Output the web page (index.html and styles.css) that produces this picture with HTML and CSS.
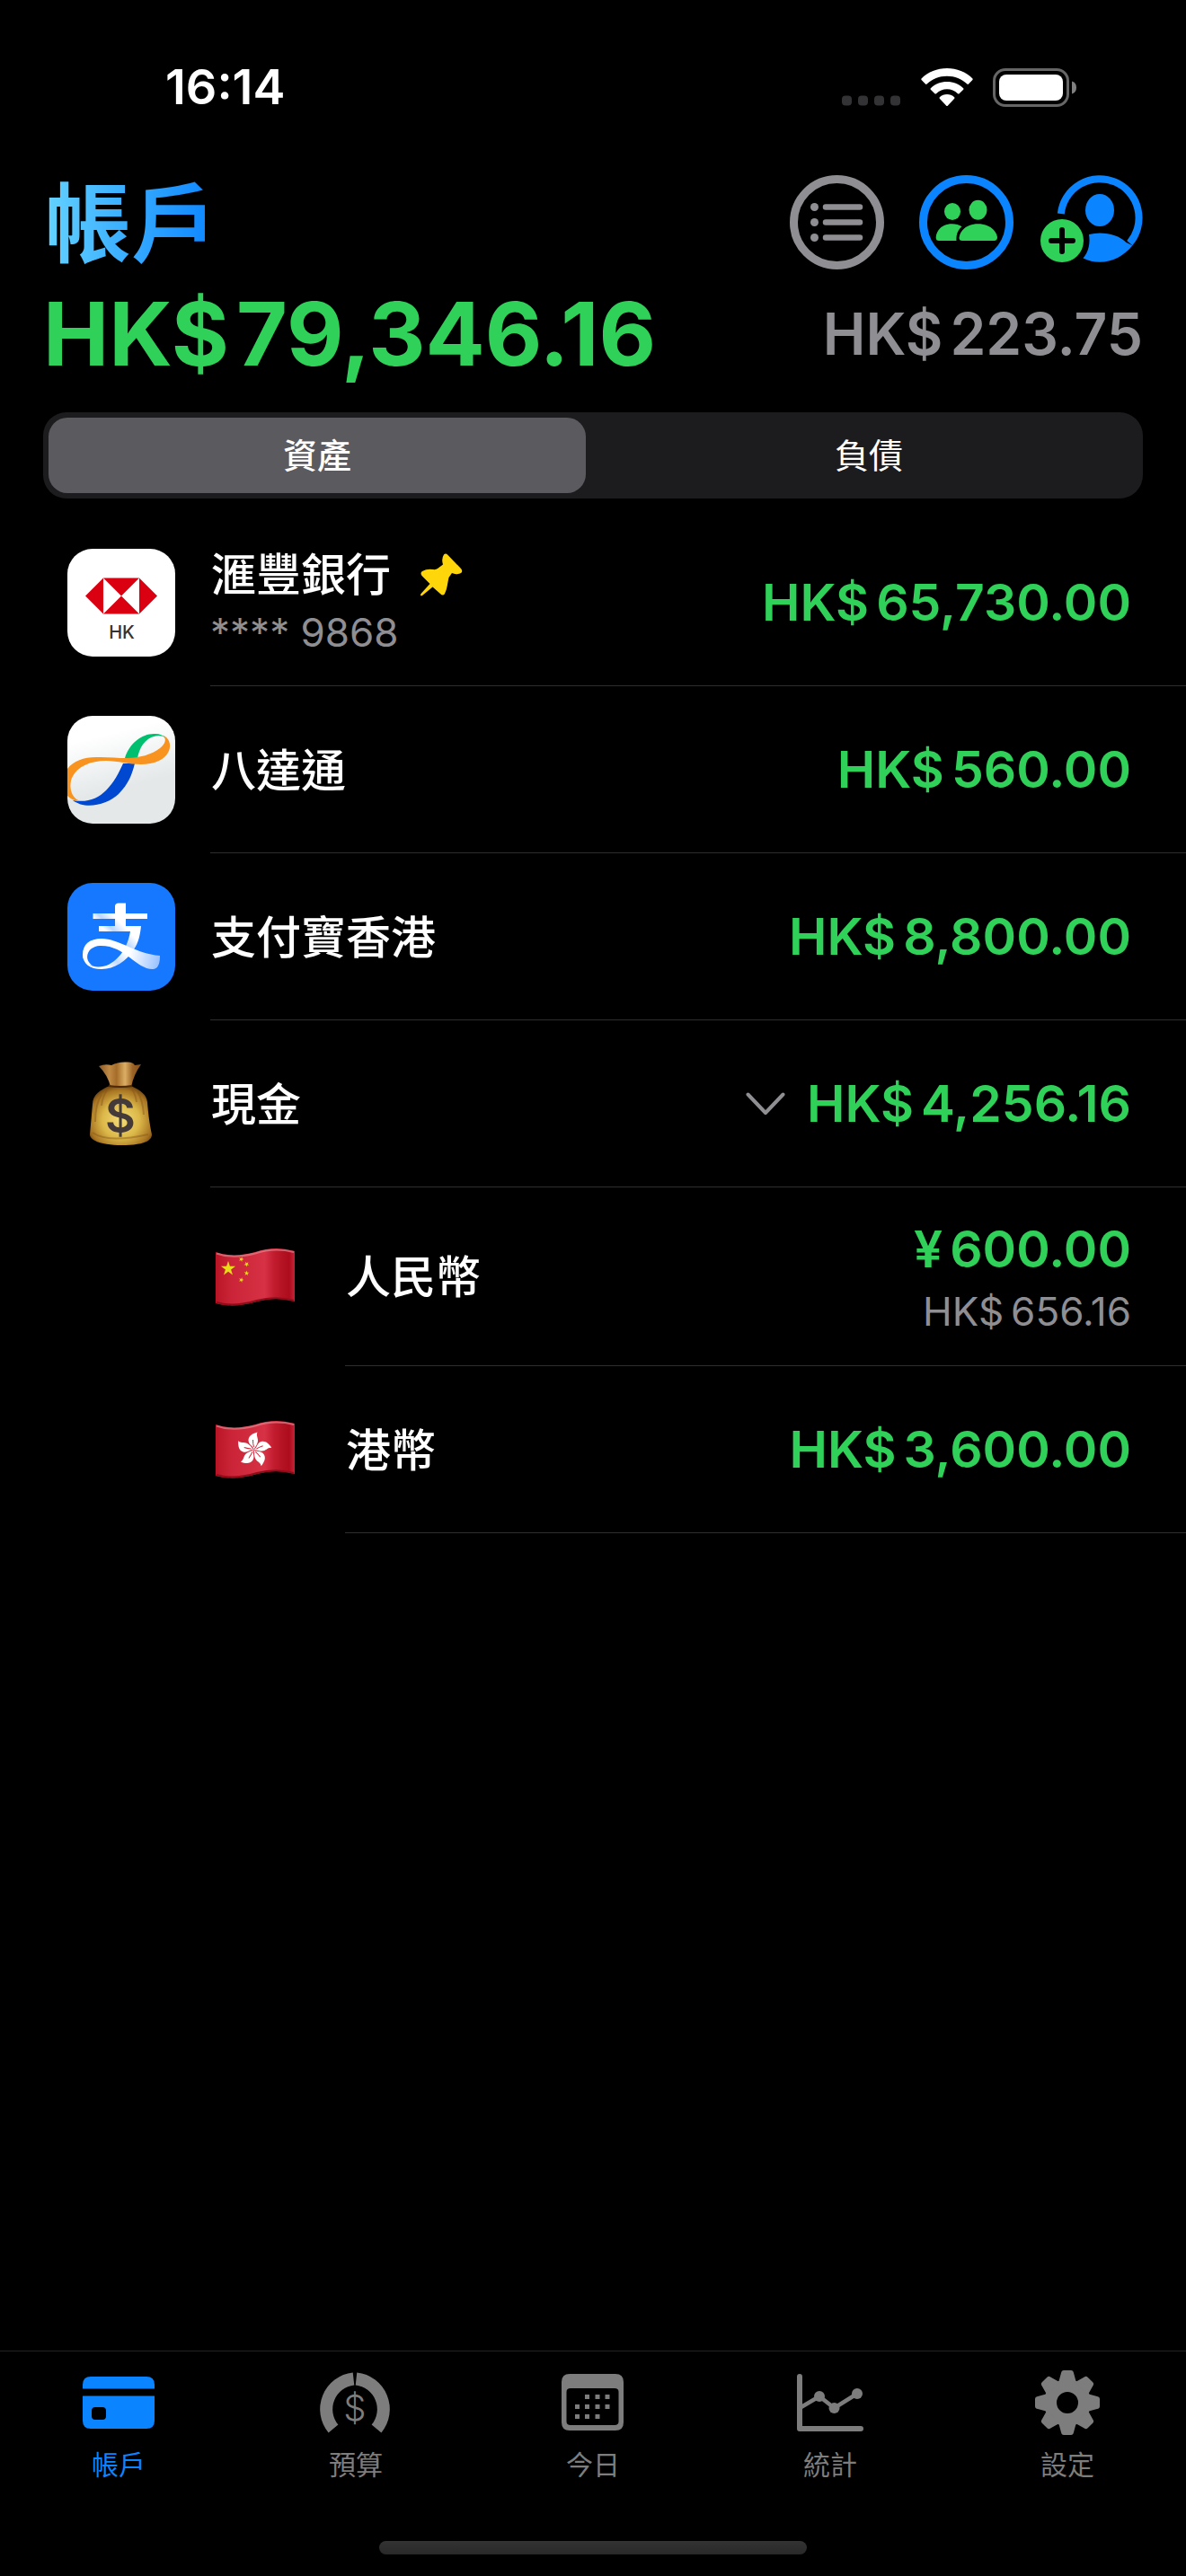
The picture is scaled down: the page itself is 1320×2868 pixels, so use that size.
FILE: index.html
```html
<!DOCTYPE html>
<html lang="zh-Hant-HK">
<head>
<meta charset="utf-8">
<meta name="viewport" content="width=device-width, initial-scale=1">
<title>帳戶</title>
<link rel="stylesheet" href="styles.css">
</head>
<body>
<div class="status">
  <time class="clock">16:14</time>
  <div class="status-icons">
    <svg width="66" height="43" viewBox="0 0 66 43" fill="#333335" aria-hidden="true">
      <rect x="0" y="30.500" width="11" height="11" rx="4"/><rect x="18" y="30.500" width="11" height="11" rx="4"/><rect x="36" y="30.500" width="11" height="11" rx="4"/><rect x="54" y="30.500" width="11" height="11" rx="4"/>
    </svg>
    <svg width="58" height="43" viewBox="0 0 58 43" fill="#fff" aria-hidden="true">
      <path d="M29 0C40 0 50 4 57.500 11.500Q58 12.300 57.400 13L53 17.600Q52.200 18.300 51.400 17.600C45 12 38 8.800 29 8.800S13 12 6.600 17.600Q5.800 18.300 5 17.600L.6 13Q0 12.300 .5 11.500C8 4 18 0 29 0Z"/>
      <path d="M29 15C36 15 42 17.500 47.200 22.200Q47.800 23 47.200 23.700L42.600 28.200Q41.800 28.800 41 28.200C37.500 25 33.500 23.300 29 23.300S20.500 25 17 28.200Q16.200 28.800 15.400 28.200L10.800 23.700Q10.200 23 10.800 22.200C16 17.500 22 15 29 15Z"/>
      <path d="M29 29C32 29 35 30.200 37.200 32.200Q37.800 33 37.200 33.700L30 41.400Q29 42.400 28 41.400L20.800 33.700Q20.200 33 20.800 32.200C23 30.200 26 29 29 29Z"/>
    </svg>
    <svg width="94" height="43" viewBox="0 0 94 43" aria-hidden="true">
      <rect x="1.500" y="1.500" width="82" height="40" rx="12.500" fill="none" stroke="#666" stroke-width="3"/>
      <rect x="7" y="7" width="71" height="29" rx="8" fill="#fff"/>
      <path d="M88 14.500Q93 16 93 21.500T88 28.500Z" fill="#808080"/>
    </svg>
  </div>
</div>

<header class="header">
  <div class="title-row">
    <h1 class="title">帳戶</h1>
    <div class="actions">
      <button class="icon-button" type="button" aria-label="清單">
        <svg width="105" height="105" viewBox="0 0 105 105" fill="none" stroke="#8e8e93" aria-hidden="true">
          <circle cx="52.500" cy="52.500" r="48" stroke-width="9"/>
          <path d="M40 35.500H78M40 52.500H78M40 69.500H78" stroke-width="6.500" stroke-linecap="round"/>
          <g fill="#8e8e93" stroke="none"><circle cx="27.500" cy="35.500" r="4.500"/><circle cx="27.500" cy="52.500" r="4.500"/><circle cx="27.500" cy="69.500" r="4.500"/></g>
        </svg>
      </button>
      <button class="icon-button" type="button" aria-label="成員">
        <svg width="105" height="105" viewBox="0 0 105 105" fill="#30d158" aria-hidden="true">
          <circle cx="52.500" cy="52.500" r="48" stroke-width="9" stroke="#0a84ff" fill="none"/>
          <ellipse cx="37" cy="40.500" rx="9" ry="9.500"/>
          <ellipse cx="65.500" cy="38.800" rx="10" ry="11"/>
          <path d="M22 73Q18.500 73 18.700 69C19.500 60 27 54.300 36.500 54.300Q43 54.300 47.500 57.300C43 61 41 66 41.500 73Z"/>
          <path d="M48 73Q44 73 44.600 69C46 60 55 54.300 65.500 54.300S85.500 60 87 69Q87 73 83.500 73Z"/>
        </svg>
      </button>
      <button class="icon-button icon-button-add" type="button" aria-label="新增帳戶">
        <svg width="114" height="105" viewBox="0 0 114 105" aria-hidden="true">
          <path d="M22.800 43A43.500 43.500 0 1 1 99.300 75.700" fill="none" stroke="#0a84ff" stroke-width="8"/>
          <ellipse cx="66" cy="39" rx="16" ry="18" fill="#0a84ff"/>
          <path d="M54 66Q60 64.500 66 64.500C78 64.500 88.500 68 95.500 75L102.400 78.200C93 90 80 96.700 66 96.700Q56 96.700 47.500 92.500C54 85 55.500 75 54 66Z" fill="#0a84ff"/>
          <circle cx="24" cy="73" r="24" fill="#30d158"/>
          <path d="M24 61V85M12 73H36" stroke="#000" stroke-width="6" stroke-linecap="round"/>
        </svg>
      </button>
    </div>
  </div>
  <div class="totals">
    <strong class="total-assets"><span class="currency">HK$</span>79,346.16</strong>
    <strong class="total-debts"><span class="currency">HK$</span>223.75</strong>
  </div>
  <div class="segments" role="tablist">
    <button class="segment segment-selected" type="button" role="tab" aria-selected="true">資產</button>
    <button class="segment" type="button" role="tab" aria-selected="false">負債</button>
  </div>
</header>

<main>
  <ul class="accounts">
    <li class="account">
      <svg class="logo" viewBox="0 0 120 120" aria-hidden="true">
        <rect width="120" height="120" fill="#fff"/>
        <path d="M20 52.500L40 32.500H80L100 52.500L80 72.500H40Z" fill="#db0011"/>
        <path d="M40 32.500L60 52.500L40 72.500ZM80 32.500L60 52.500L80 72.500Z" fill="#fff"/>
        <text class="logo-text" x="60.500" y="100" text-anchor="middle">HK</text>
      </svg>
      <div class="details">
        <div class="labels">
          <div class="name name-pinned">滙豐銀行
            <svg width="48" height="48" viewBox="0 0 48 48" fill="#ffd60a" aria-hidden="true"><path d="M27 1.500Q29 -.5 31.500 2L46 17Q49 21 45 22.500Q40 24 36 22L32.500 27C31 33 31 39 28 45Q26 48 23 45L14.500 37.500L3 47Q0 48 1.500 45L11.500 34L3 25.500Q0 22 3 20Q8 17 15 18Q18 18.500 20 17L26 12.500Q24 6 27 1.500Z"/></svg>
          </div>
          <div class="note">**** 9868</div>
        </div>
        <div class="amount"><span class="currency">HK$</span>65,730.00</div>
      </div>
    </li>
    <li class="account">
      <svg class="logo" viewBox="0 0 120 120" aria-hidden="true">
        <defs><linearGradient id="silver" x1=".2" y1="0" x2=".45" y2="1"><stop offset=".2" stop-color="#fff"/><stop offset=".7" stop-color="#e4e8e9"/></linearGradient></defs>
        <rect width="120" height="120" fill="url(#silver)"/>
        <path d="M62 53L75 53C72 65 68 76 57 87C44 99 20 105 6 94C22 97 34 92 43 83C52 74 57 64 62 53Z" fill="#0048d0"/>
        <path d="M64 47C69 30 84 19 98 20Q105 20 110 25Q105 21 98 22.500C86 25 80 36 78 47Z" fill="#00bf6f"/>
        <path d="M106 21.500C113 24 116 32 113 39C109 49 96 54 82 54C68 54 56 50 43 50C26 50 11 56 5 69C1 80 5 92 14 94.500Q6 95 0 89V59C7 50 18 46 32 46C44 45.500 55 47 66 47C80 47 94 43 103 36C109 31 111 26 106 21.500Z" fill="#f7931e"/>
      </svg>
      <div class="details">
        <div class="name">八達通</div>
        <div class="amount"><span class="currency">HK$</span>560.00</div>
      </div>
    </li>
    <li class="account">
      <svg class="logo" viewBox="0 0 120 120" aria-hidden="true">
        <defs>
          <linearGradient id="tail" x1="65" y1="80" x2="103" y2="88" gradientUnits="userSpaceOnUse"><stop offset=".1" stop-color="#fff"/><stop offset="1" stop-color="#96c0ff"/></linearGradient>
          <linearGradient id="leg" x1="76" y1="62" x2="42" y2="94" gradientUnits="userSpaceOnUse"><stop offset="0" stop-color="#fff"/><stop offset=".25" stop-color="#bcd7ff"/><stop offset=".4" stop-color="#fff"/><stop offset=".7" stop-color="#c4dcff"/><stop offset="1" stop-color="#fff"/></linearGradient>
        </defs>
        <rect width="120" height="120" fill="#1677ff"/>
        <path d="M53 26Q53 22.500 57 22.500H65V34H89V40H65V48H82C81 58 79 67 74 74C66 87 52 96 38 96C25 96 17 90 17 79C17 81 20 93 34 93.500C50 94 66 78 70 54H35V48H53V40H28.500V34H53Z" fill="url(#leg)"/>
        <path d="M17 80C17 68 25 62 38 62C57 62 76 79 103 81Q103 96 95 96C76 96 64 69 36 70C21 71 18 86 28 92C21 90 17 86 17 80Z" fill="url(#tail)"/>
      </svg>
      <div class="details">
        <div class="name">支付寶香港</div>
        <div class="amount"><span class="currency">HK$</span>8,800.00</div>
      </div>
    </li>
    <li class="account">
      <svg class="logo logo-plain" viewBox="0 0 120 120" aria-hidden="true">
        <defs>
          <radialGradient id="sack" cx=".5" cy=".58" r=".6"><stop offset="0" stop-color="#f3dc78"/><stop offset=".5" stop-color="#dcb849"/><stop offset=".85" stop-color="#a87522"/><stop offset="1" stop-color="#70450f"/></radialGradient>
          <linearGradient id="neck" x1="0" x2="1"><stop offset="0" stop-color="#8a5a28"/><stop offset=".25" stop-color="#c08b45"/><stop offset=".42" stop-color="#a46c28"/><stop offset=".62" stop-color="#dcae64"/><stop offset=".8" stop-color="#9c6425"/><stop offset="1" stop-color="#80501e"/></linearGradient>
        </defs>
        <path d="M35 18Q42 15 49 17Q56 13 66 13.500Q73 13 75 17L82 16Q74 27 71 41H48Q45 28 35 18Z" fill="url(#neck)"/>
        <path d="M47 40H71C82 45 88 50 89 58C90 70 91 80 94 94C94 103 80 106 60 106C42 106 25 102 25 94C26 83 27 72 28 60C28 50 37 44 47 40Z" fill="url(#sack)"/>
        <path d="M38 50Q31 60 31 80M44 45Q39 52 38 62M78 46Q84 56 85 72M72 44Q76 50 77 58M28 92Q45 104 90 94" fill="none" stroke="#85571a" stroke-opacity=".45" stroke-width="2"/>
        <path d="M46 40Q59 42 72 40" fill="none" stroke="#4a2908" stroke-width="2"/>
        <text class="sack-text" x="59" y="92" text-anchor="middle">$</text>
      </svg>
      <div class="details">
        <div class="name">現金</div>
        <div class="expandable">
          <button class="icon-button" type="button" aria-expanded="true" aria-label="收合現金帳戶">
            <svg width="44" height="26" viewBox="0 0 44 26" fill="none" stroke="#8e8e93" stroke-width="4" stroke-linecap="round" stroke-linejoin="round" aria-hidden="true"><path d="M2.500 2.500L22 23L41.500 2.500"/></svg>
          </button>
          <div class="amount"><span class="currency">HK$</span>4,256.16</div>
        </div>
      </div>
    </li>
    <li class="account account-child">
      <svg class="flag" viewBox="0 0 90 66" aria-hidden="true">
        <defs>
          <linearGradient id="cloth" x1="0" x2="1"><stop offset="0" stop-color="#b81426"/><stop offset=".2" stop-color="#cb2438"/><stop offset=".62" stop-color="#d63144"/><stop offset=".75" stop-color="#bf1b2d"/><stop offset=".93" stop-color="#ac0c1c"/><stop offset="1" stop-color="#c52438"/></linearGradient>
          <path id="wave" d="M1 5C16 10 29 9 45 5C60 0 74 0 89 4V60C74 56 62 56 47 60C30 65 15 66 1 62Z"/>
          <path id="star" d="M0-1L.2245-.309L.951-.309L.363 .118L.588 .809L0 .382L-.588 .809L-.363 .118L-.951-.309L-.2245-.309Z"/>
        </defs>
        <use href="#wave" fill="url(#cloth)"/>
        <path d="M2 6.500C16 11.500 29 10.500 45 6.500C60 1.500 74 1.500 88 5" fill="none" stroke="#e2808a" stroke-opacity=".7" stroke-width="2"/>
        <path d="M2 61C15 65 30 64 47 59C62 55 74 55 88 59" fill="none" stroke="#8d0d1a" stroke-width="2"/>
        <g fill="#e9dc18">
          <use href="#star" transform="translate(15 23.500) scale(8.500)"/>
          <use href="#star" transform="translate(29.500 13) rotate(20) scale(3)"/>
          <use href="#star" transform="translate(35.500 18.500) rotate(40) scale(3)"/>
          <use href="#star" transform="translate(35.500 28.500) rotate(5) scale(3)"/>
          <use href="#star" transform="translate(29.500 36) rotate(20) scale(3)"/>
        </g>
      </svg>
      <div class="details">
        <div class="name">人民幣</div>
        <div class="amounts">
          <div class="amount"><span class="currency">¥</span>600.00</div>
          <div class="note"><span class="currency">HK$</span>656.16</div>
        </div>
      </div>
    </li>
    <li class="account account-child">
      <svg class="flag" viewBox="0 0 90 66" aria-hidden="true">
        <defs><g id="petal"><path d="M0 0C0-4-6-5-6-10.500C-6-15-2-18 4-19.500C2-15 6-12 4-7.500C3-4 1-3 0 0Z" fill="#fff"/><path d="M0-3Q-1-6-1-11" fill="none" stroke="#c9283a" stroke-width="1"/></g></defs>
        <use href="#wave" fill="url(#cloth)"/>
        <path d="M2 6.500C16 11.500 29 10.500 45 6.500C60 1.500 74 1.500 88 5" fill="none" stroke="#e2808a" stroke-opacity=".7" stroke-width="2"/>
        <path d="M2 61C15 65 30 64 47 59C62 55 74 55 88 59" fill="none" stroke="#8d0d1a" stroke-width="2"/>
        <g transform="translate(43.500 33)">
          <use href="#petal"/><use href="#petal" transform="rotate(72)"/><use href="#petal" transform="rotate(144)"/><use href="#petal" transform="rotate(216)"/><use href="#petal" transform="rotate(288)"/>
        </g>
      </svg>
      <div class="details">
        <div class="name">港幣</div>
        <div class="amount"><span class="currency">HK$</span>3,600.00</div>
      </div>
    </li>
  </ul>
</main>

<nav class="tabbar">
  <div class="tabs">
    <a class="tab tab-current" href="#accounts" aria-current="page">
      <svg class="tab-icon" viewBox="0 0 84 74" fill="currentColor" aria-hidden="true"><path d="M2 21.500V17Q2 8 11 8H73Q82 8 82 17V21.500Z"/><path fill-rule="evenodd" d="M2 29.500H82V57Q82 66 73 66H11Q2 66 2 57ZM16 42Q12 42 12 46V52Q12 56 16 56H24Q28 56 28 52V46Q28 42 24 42Z"/></svg>
      帳戶
    </a>
    <a class="tab" href="#budget">
      <svg class="tab-icon" viewBox="0 0 84 74" aria-hidden="true">
        <path d="M39.500 10.500A34 34 0 0 0 17 66M42.500 10.500A34 34 0 0 1 65 66" fill="none" stroke="currentColor" stroke-width="14"/>
        <text class="tab-icon-text" x="41" y="57" text-anchor="middle">$</text>
      </svg>
      預算
    </a>
    <a class="tab" href="#today">
      <svg class="tab-icon" viewBox="0 0 84 74" fill="currentColor" aria-hidden="true">
        <path fill-rule="evenodd" d="M16 5H67Q76 5 76 14V59Q76 68 67 68H16Q7 68 7 59V14Q7 5 16 5ZM17 21Q12.500 21 12.500 25V58Q12.500 62 17 62H66Q70.500 62 70.500 58V25Q70.500 21 66 21Z"/>
        <path d="M33 28h5v5h-5zM44.500 28h5v5h-5zM55.500 28h5v5h-5zM22 39h5v5h-5zM33 39h5v5h-5zM44.500 39h5v5h-5zM55.500 39h5v5h-5zM22 50h5v5h-5zM33 50h5v5h-5zM44.500 50h5v5h-5z"/>
      </svg>
      今日
    </a>
    <a class="tab" href="#stats">
      <svg class="tab-icon" viewBox="0 0 84 74" fill="none" stroke="currentColor" aria-hidden="true">
        <path d="M8 8V66H76" stroke-width="6" stroke-linecap="round" stroke-linejoin="round"/>
        <path d="M8 43L30 30L46.500 43L72 27" stroke-width="4.500"/>
        <g fill="currentColor" stroke="none"><circle cx="30" cy="30" r="6"/><circle cx="46.500" cy="43" r="6"/><circle cx="72" cy="27" r="6"/></g>
      </svg>
      統計
    </a>
    <a class="tab" href="#settings">
      <svg class="tab-icon" viewBox="0 0 84 74" aria-hidden="true">
        <defs><path id="tooth" d="M-10-22L-7-33Q-6.500-36-4-36H4Q6.500-36 7-33L10-22Z"/></defs>
        <g transform="translate(42 37)" fill="currentColor">
          <circle r="19" fill="none" stroke="currentColor" stroke-width="14"/>
          <use href="#tooth"/><use href="#tooth" transform="rotate(45)"/><use href="#tooth" transform="rotate(90)"/><use href="#tooth" transform="rotate(135)"/><use href="#tooth" transform="rotate(180)"/><use href="#tooth" transform="rotate(225)"/><use href="#tooth" transform="rotate(270)"/><use href="#tooth" transform="rotate(315)"/>
        </g>
      </svg>
      設定
    </a>
  </div>
  <div class="home-indicator"></div>
</nav>
</body>
</html>
```

FILE: styles.css
```css
* {
  box-sizing: border-box;
}

:root {
  --green: #30d158;
  --gray: #8e8e93;
  --blue: #0a84ff;
  --line: #2e2e30;
}

body {
  display: flex;
  flex-direction: column;
  min-height: 100vh;
  margin: 0;
  background: #000;
  color: #fff;
  font-family: Inter, "Noto Sans CJK TC", sans-serif;
}

button {
  padding: 0;
  border: 0;
  background: none;
  color: inherit;
  font: inherit;
}

svg {
  display: block;
  flex: none;
}

/* Status bar */

.status {
  display: flex;
  align-items: center;
  justify-content: space-between;
  padding: 65px 121px 0 184px;
}

.clock {
  font-size: 54px;
  font-weight: 600;
  line-height: 64px;
}

.status-icons {
  display: flex;
  gap: 22px;
}

/* Page header */

.header {
  padding: 66px 48px 0;
}

.title-row,
.totals {
  display: flex;
  align-items: center;
  justify-content: space-between;
}

.title {
  margin: 0 2px;
  padding-top: 3px;
  background: linear-gradient(90deg, #64d2ff, var(--blue));
  background-clip: text;
  color: transparent;
  font-size: 96px;
  font-weight: 700;
  line-height: 102px;
}

.actions {
  display: flex;
  gap: 39px;
}

.icon-button {
  display: block;
}

.icon-button-add {
  margin-left: -9px;
}

.currency {
  margin-right: 8px;
}

.totals {
  margin-top: 14px;
  line-height: 116px;
}

.total-assets {
  color: var(--green);
  font-size: 98px;
  font-weight: 700;
}

.total-debts {
  color: var(--gray);
  font-size: 64px;
  font-weight: 600;
}

.segments {
  display: flex;
  gap: 16px;
  margin-top: 29px;
  padding: 6px;
  border-radius: 26px;
  background: #1c1c1e;
}

.segment {
  flex: 1;
  border-radius: 21px;
  font-size: 38px;
  font-weight: 400;
  line-height: 84px;
}

.segment-selected {
  background: #5b5a5f;
  font-weight: 500;
}

/* Account list */

.accounts {
  margin: 0;
  padding: 23px 0 0;
  list-style: none;
}

.account {
  display: flex;
  align-items: center;
  gap: 39px;
  padding-left: 75px;
}

.account-child {
  gap: 55px;
  padding-left: 239px;
}

.logo {
  width: 120px;
  height: 120px;
  border-radius: 28px;
}

.logo-plain {
  border-radius: 0;
}

.logo-text {
  fill: #333;
  font-size: 20px;
  font-weight: 500;
}

.sack-text {
  fill: #443a39;
  font-size: 52px;
  font-weight: 600;
}

.flag {
  width: 90px;
  height: 66px;
}

.details {
  display: flex;
  flex: 1;
  align-items: center;
  justify-content: space-between;
  min-height: 186px;
  padding-right: 61px;
  border-bottom: 1px solid var(--line);
}

.name {
  padding-top: 2px;
  padding-left: 1px;
  font-size: 50px;
  font-weight: 500;
  line-height: 64px;
}

.name-pinned {
  display: flex;
  align-items: center;
  gap: 32px;
}

.note {
  color: var(--gray);
  font-size: 44px;
  line-height: 64px;
}

.amount {
  color: var(--green);
  font-size: 57px;
  font-weight: 600;
  line-height: 74px;
}

.amounts {
  padding: 32px 0 28px;
  text-align: right;
}

.expandable {
  display: flex;
  align-items: center;
  gap: 24px;
}

/* Tab bar */

.tabbar {
  margin-top: auto;
  padding-bottom: 24px;
  border-top: 1px solid #232324;
}

.tabs {
  display: flex;
}

.tab {
  display: flex;
  flex: 1;
  flex-direction: column;
  align-items: center;
  gap: 9px;
  padding: 20px 0 62px;
  color: #7d7d7d;
  font-size: 30px;
  line-height: 46px;
  text-decoration: none;
}

.tab-current {
  color: var(--blue);
}

.tab-icon {
  width: 84px;
  height: 74px;
}

.tab-icon-text {
  fill: currentColor;
  font-size: 40px;
  font-weight: 300;
}

.home-indicator {
  width: 36%;
  height: 15px;
  margin: 0 auto;
  border-radius: 8px;
  background: linear-gradient(#333, #292929);
}
```
